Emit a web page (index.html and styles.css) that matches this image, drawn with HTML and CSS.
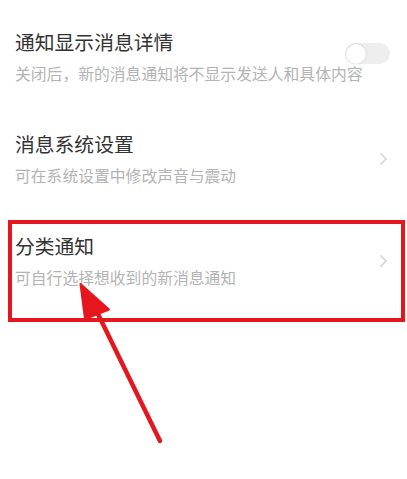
FILE: index.html
```html
<!DOCTYPE html>
<html lang="zh">
<head>
<meta charset="utf-8">
<link rel="stylesheet" href="styles.css">
</head>
<body>
<div class="page">
  <div class="row">
    <div class="text">
      <div class="title">通知显示消息详情</div>
      <div class="sub">关闭后，新的消息通知将不显示发送人和具体内容</div>
    </div>
    <div class="toggle"><div class="knob"></div></div>
  </div>
  <div class="row">
    <div class="text">
      <div class="title">消息系统设置</div>
      <div class="sub">可在系统设置中修改声音与震动</div>
    </div>
    <svg class="chev" width="9" height="14" viewBox="0 0 9 14"><polyline points="1.5,1.5 7,7 1.5,12.5" fill="none" stroke="#cfcfcf" stroke-width="1.4"/></svg>
  </div>
  <div class="row">
    <div class="text">
      <div class="title">分类通知</div>
      <div class="sub">可自行选择想收到的新消息通知</div>
    </div>
    <svg class="chev" width="9" height="14" viewBox="0 0 9 14"><polyline points="1.5,1.5 7,7 1.5,12.5" fill="none" stroke="#cfcfcf" stroke-width="1.4"/></svg>
  </div>
  <div class="highlight"></div>
  <svg class="arrow" width="407" height="479" viewBox="0 0 407 479">
    <line x1="97" y1="312" x2="160" y2="441" stroke="#e5161d" stroke-width="4.5" stroke-linecap="round"/>
    <polygon points="80.5,284 85,319 109,309.5" fill="#e5161d" stroke="#e5161d" stroke-width="2" stroke-linejoin="round"/>
  </svg>
</div>
</body>
</html>
```
FILE: styles.css
```css
html, body {
  margin: 0;
  padding: 0;
  background: #ffffff;
}
body {
  font-family: "Noto Sans CJK SC", "Noto Sans", sans-serif;
}
.page {
  position: relative;
  width: 407px;
  height: 479px;
  overflow: hidden;
}
.row {
  height: 102px;
  box-sizing: border-box;
  padding: 30px 17px 17px 15px;
  display: flex;
  align-items: flex-start;
  justify-content: space-between;
}
.text {
  display: flex;
  flex-direction: column;
  min-width: 0;
}
.title {
  font-size: 19.8px;
  line-height: 24px;
  color: #333333;
  white-space: nowrap;
}
.sub {
  margin-top: 10px;
  font-size: 15.8px;
  line-height: 20px;
  color: #b3b3b3;
  white-space: nowrap;
}
.toggle {
  flex-shrink: 0;
  margin-top: 13px;
  width: 45px;
  height: 21px;
  border-radius: 11px;
  background: #eeeeee;
  display: flex;
  align-items: center;
}
.knob {
  width: 20px;
  height: 20px;
  border-radius: 50%;
  background: #ffffff;
  box-shadow: 0 0 1.5px rgba(0,0,0,0.25);
  margin-left: 0.5px;
}
.chev {
  flex-shrink: 0;
  margin-top: 20px;
  margin-right: 2px;
}
.highlight {
  position: absolute;
  left: 8px;
  top: 220px;
  width: 397px;
  height: 102px;
  box-sizing: border-box;
  border: 4.5px solid #e5161d;
}
.arrow {
  position: absolute;
  left: 0;
  top: 0;
}
```
